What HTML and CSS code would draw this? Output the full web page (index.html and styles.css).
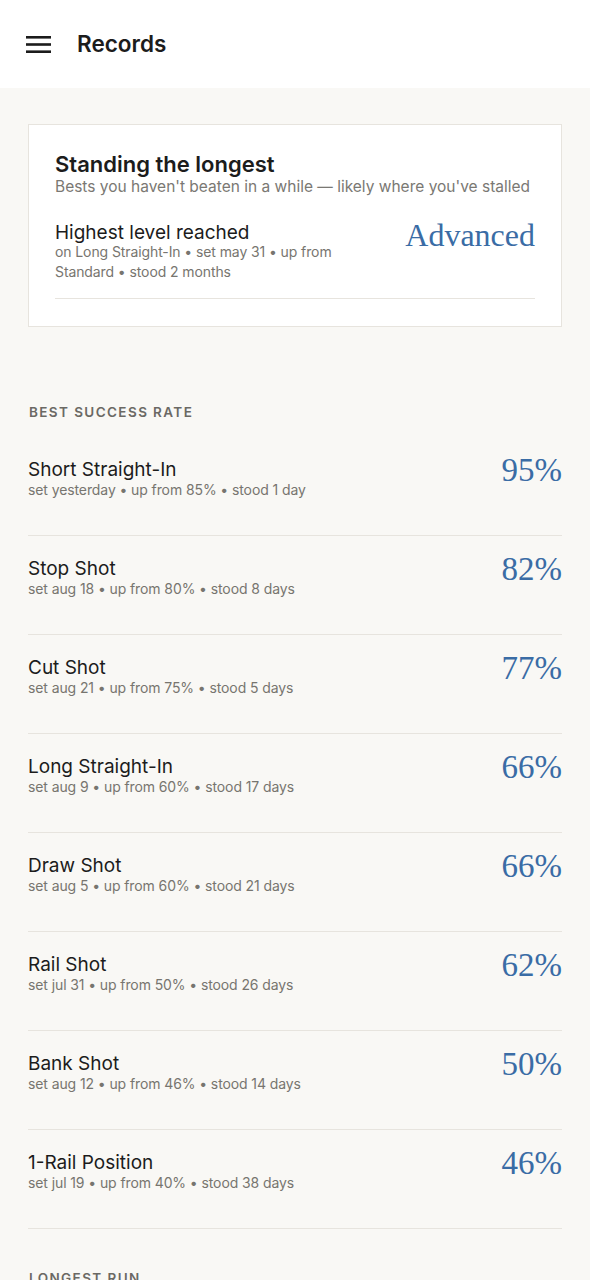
FILE: index.html
```html
<!DOCTYPE html>
<html lang="en">
<head>
<meta charset="utf-8">
<title>Records</title>
<link rel="stylesheet" href="styles.css">
</head>
<body>
<header class="topbar">
  <svg class="menu-icon" width="25" height="18" viewBox="0 0 25 18" aria-hidden="true">
    <rect x="0" y="0" width="25" height="2.6" fill="#1c1c1c"/>
    <rect x="0" y="7.2" width="25" height="2.6" fill="#1c1c1c"/>
    <rect x="0" y="14.4" width="25" height="2.6" fill="#1c1c1c"/>
  </svg>
  <h1 class="topbar-title">Records</h1>
</header>

<main class="content">
  <section class="card">
    <h2 class="card-title">Standing the longest</h2>
    <p class="card-sub">Bests you haven't beaten in a while — likely where you've stalled</p>
    <div class="card-row">
      <div class="card-text">
        <div class="row-name">Highest level reached</div>
        <div class="card-meta">on Long Straight-In • set may 31 • up from Standard • stood 2 months</div>
      </div>
      <div class="card-value">Advanced</div>
    </div>
    <div class="card-divider"></div>
  </section>

  <section class="section">
    <h3 class="section-label">Best success rate</h3>
    <ul class="rows">
      <li class="row"><div class="row-text"><div class="row-name">Short Straight-In</div><div class="row-meta">set yesterday • up from 85% • stood 1 day</div></div><div class="row-value">95%</div></li>
      <li class="row"><div class="row-text"><div class="row-name">Stop Shot</div><div class="row-meta">set aug 18 • up from 80% • stood 8 days</div></div><div class="row-value">82%</div></li>
      <li class="row"><div class="row-text"><div class="row-name">Cut Shot</div><div class="row-meta">set aug 21 • up from 75% • stood 5 days</div></div><div class="row-value">77%</div></li>
      <li class="row"><div class="row-text"><div class="row-name">Long Straight-In</div><div class="row-meta">set aug 9 • up from 60% • stood 17 days</div></div><div class="row-value">66%</div></li>
      <li class="row"><div class="row-text"><div class="row-name">Draw Shot</div><div class="row-meta">set aug 5 • up from 60% • stood 21 days</div></div><div class="row-value">66%</div></li>
      <li class="row"><div class="row-text"><div class="row-name">Rail Shot</div><div class="row-meta">set jul 31 • up from 50% • stood 26 days</div></div><div class="row-value">62%</div></li>
      <li class="row"><div class="row-text"><div class="row-name">Bank Shot</div><div class="row-meta">set aug 12 • up from 46% • stood 14 days</div></div><div class="row-value">50%</div></li>
      <li class="row"><div class="row-text"><div class="row-name">1-Rail Position</div><div class="row-meta">set jul 19 • up from 40% • stood 38 days</div></div><div class="row-value">46%</div></li>
    </ul>
  </section>

  <section class="section section-next">
    <h3 class="section-label">Longest run</h3>
  </section>
</main>
</body>
</html>
```

FILE: styles.css
```css
* { box-sizing: border-box; }

html, body {
  margin: 0;
  padding: 0;
  background: #f9f8f5;
  font-family: Inter, "Liberation Sans", sans-serif;
  color: #1c1c1c;
}

.topbar {
  height: 88px;
  background: #ffffff;
  display: flex;
  align-items: center;
  padding: 0 26px;
  gap: 26px;
}

.menu-icon { display: block; margin-top: 1px; }

.topbar-title {
  margin: 0;
  font-size: 22.5px;
  font-weight: 600;
  line-height: 26px;
  color: #1c1c1c;
}

.content {
  padding: 36px 28px 0;
}

.card {
  background: #ffffff;
  border: 1px solid #e7e4de;
  padding: 26px 26px 27px;
}

.card-title {
  margin: 0;
  font-size: 22px;
  font-weight: 600;
  line-height: 26px;
  color: #1c1c1c;
}

.card-sub {
  margin: 0;
  font-size: 15.5px;
  line-height: 20px;
  color: #7a7873;
}

.card-row {
  display: flex;
  justify-content: space-between;
  align-items: flex-start;
  margin-top: 26px;
}

.card-text { width: 300px; }

.card-text .row-name { line-height: 20px; }

.card-meta {
  margin-top: -1px;
  font-size: 14px;
  line-height: 20px;
  letter-spacing: -0.1px;
  color: #77756f;
}

.card-value {
  margin-top: -4px;
  font-family: "Liberation Serif", "DejaVu Serif", serif;
  font-size: 32px;
  line-height: 32px;
  color: #3a6ca5;
}

.card-divider {
  height: 1px;
  background: #e7e4de;
  margin-top: 16px;
}

.section { margin-top: 77px; }
.section-next { margin-top: 41px; }

.section-label {
  margin: 0 0 17px 1px;
  font-size: 13.5px;
  font-weight: 600;
  line-height: 16px;
  letter-spacing: 1.4px;
  text-transform: uppercase;
  color: #6b6964;
}

.rows {
  list-style: none;
  margin: 0;
  padding: 0;
}

.row {
  display: flex;
  justify-content: space-between;
  align-items: flex-start;
  padding: 22px 0 36px;
  border-bottom: 1px solid #e7e4de;
}

.row-name {
  font-size: 19px;
  line-height: 22px;
  color: #1c1c1c;
}

.row-meta {
  font-size: 14px;
  line-height: 18px;
  letter-spacing: -0.1px;
  color: #77756f;
}

.row-value {
  margin-top: -5px;
  font-family: "Liberation Serif", "DejaVu Serif", serif;
  font-size: 33px;
  line-height: 33px;
  color: #3a6ca5;
}
```
